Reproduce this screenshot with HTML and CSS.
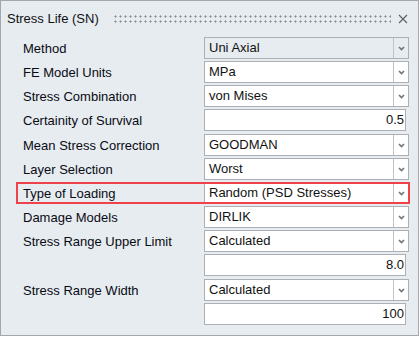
FILE: index.html
```html
<!DOCTYPE html>
<html lang="en">
<head>
    <meta charset="UTF-8">
    <title>Stress Life (SN)</title>
    <link rel="stylesheet" href="styles.css">
</head>
<body>
    <div class="panel">
        <div class="titlebar">
            <span class="title">Stress Life (SN)</span>
            <span class="grip"></span>
            <svg class="close" width="10" height="10" viewBox="0 0 10 10">
                <path d="M1 1 L9 9 M9 1 L1 9" stroke="#5a5f64" stroke-width="1.1" fill="none"/>
            </svg>
        </div>

        <div class="form">
            <div class="row">
                <span class="label">Method</span>
                <div class="select disabled"><span class="value">Uni Axial</span><span class="drop"><svg width="7" height="5" viewBox="0 0 7 5"><path d="M1 1 L3.5 3.5 L6 1" stroke="#6e7378" stroke-width="1.6" fill="none"/></svg></span></div>
            </div>
            <div class="row">
                <span class="label">FE Model Units</span>
                <div class="select"><span class="value">MPa</span><span class="drop"><svg width="7" height="5" viewBox="0 0 7 5"><path d="M1 1 L3.5 3.5 L6 1" stroke="#6e7378" stroke-width="1.6" fill="none"/></svg></span></div>
            </div>
            <div class="row">
                <span class="label">Stress Combination</span>
                <div class="select"><span class="value">von Mises</span><span class="drop"><svg width="7" height="5" viewBox="0 0 7 5"><path d="M1 1 L3.5 3.5 L6 1" stroke="#6e7378" stroke-width="1.6" fill="none"/></svg></span></div>
            </div>
            <div class="row text-row">
                <span class="label">Certainity of Survival</span>
                <div class="field">0.5</div>
            </div>
            <div class="row">
                <span class="label">Mean Stress Correction</span>
                <div class="select"><span class="value">GOODMAN</span><span class="drop"><svg width="7" height="5" viewBox="0 0 7 5"><path d="M1 1 L3.5 3.5 L6 1" stroke="#6e7378" stroke-width="1.6" fill="none"/></svg></span></div>
            </div>
            <div class="row">
                <span class="label">Layer Selection</span>
                <div class="select"><span class="value">Worst</span><span class="drop"><svg width="7" height="5" viewBox="0 0 7 5"><path d="M1 1 L3.5 3.5 L6 1" stroke="#6e7378" stroke-width="1.6" fill="none"/></svg></span></div>
            </div>
            <div class="row highlight">
                <span class="label">Type of Loading</span>
                <div class="select"><span class="value">Random (PSD Stresses)</span><span class="drop"><svg width="7" height="5" viewBox="0 0 7 5"><path d="M1 1 L3.5 3.5 L6 1" stroke="#6e7378" stroke-width="1.6" fill="none"/></svg></span></div>
            </div>
            <div class="row">
                <span class="label">Damage Models</span>
                <div class="select"><span class="value">DIRLIK</span><span class="drop"><svg width="7" height="5" viewBox="0 0 7 5"><path d="M1 1 L3.5 3.5 L6 1" stroke="#6e7378" stroke-width="1.6" fill="none"/></svg></span></div>
            </div>
            <div class="row">
                <span class="label">Stress Range Upper Limit</span>
                <div class="select"><span class="value">Calculated</span><span class="drop"><svg width="7" height="5" viewBox="0 0 7 5"><path d="M1 1 L3.5 3.5 L6 1" stroke="#6e7378" stroke-width="1.6" fill="none"/></svg></span></div>
            </div>
            <div class="row text-row">
                <span class="label"></span>
                <div class="field">8.0</div>
            </div>
            <div class="row">
                <span class="label">Stress Range Width</span>
                <div class="select"><span class="value">Calculated</span><span class="drop"><svg width="7" height="5" viewBox="0 0 7 5"><path d="M1 1 L3.5 3.5 L6 1" stroke="#6e7378" stroke-width="1.6" fill="none"/></svg></span></div>
            </div>
            <div class="row text-row">
                <span class="label"></span>
                <div class="field">100</div>
            </div>
        </div>
    </div>
</body>
</html>
```

FILE: styles.css
```css
body {
    margin: 0;
    background: #ffffff;
    font-family: "Liberation Sans", Arial, sans-serif;
    font-size: 13px;
    color: #111;
}

.panel {
    width: 419px;
    height: 336px;
    box-sizing: border-box;
    border: 1px solid #a3a8ad;
    background: #e6ecf0;
}

/* title bar with grip and close button */
.titlebar {
    display: flex;
    align-items: center;
    height: 30px;
    margin-top: 3px;
    padding-left: 6px;
}

.title {
    line-height: 30px;
    white-space: nowrap;
}

.grip {
    flex: 1;
    height: 10px;
    margin-left: 14px;
    margin-right: 7px;
    background-image: radial-gradient(circle at 2.5px 2.5px, #8a8f95 0.9px, transparent 1.2px);
    background-size: 5px 5px;
}

.close {
    margin-right: 10px;
    display: block;
}

/* form rows */
.form {
    padding-left: 22px;
    padding-top: 3px;
}

.row {
    display: grid;
    grid-template-columns: 181px 205px;
    align-items: center;
    height: 22px;
    margin-bottom: 2px;
    position: relative;
}

.row.text-row {
    margin-bottom: 3px;
}

.label {
    white-space: nowrap;
    color: #0a0a14;
}

.select {
    display: flex;
    height: 22px;
    box-sizing: border-box;
    border: 1px solid #acb0b5;
    background: #fff;
}

.select.disabled {
    background: #e6ecf0;
}

.value {
    flex: 1;
    padding-left: 4px;
    line-height: 20px;
    white-space: nowrap;
}

.drop {
    width: 14px;
    border-left: 1px solid #c0c4c8;
    display: flex;
    align-items: center;
    justify-content: center;
}

.drop svg {
    display: block;
}

.field {
    width: 202px;
    height: 22px;
    box-sizing: border-box;
    border: 1px solid #acb0b5;
    background: #fff;
    text-align: right;
    padding-right: 1px;
    line-height: 20px;
}

/* red marker around the row */
.highlight::after {
    content: "";
    position: absolute;
    left: -7px;
    top: 0;
    width: 394px;
    height: 22px;
    box-sizing: border-box;
    border: 2px solid #f0424a;
    pointer-events: none;
}
```
